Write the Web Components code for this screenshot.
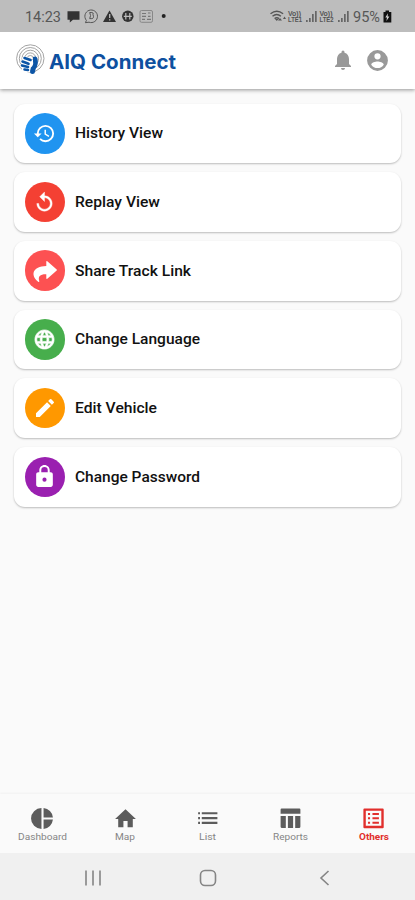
<!DOCTYPE html>
<html lang="en">
<head>
<meta charset="utf-8">
<title>AIQ Connect</title>
<style>
html,body{margin:0;height:100%;background:#fafafa}
body{font-family:Roboto,"Liberation Sans",sans-serif;overflow:hidden}
</style>
</head>
<body>
<aiq-app></aiq-app>
<script>
const ICONS = {
  history:'<path d="M13 3a9 9 0 0 0-9 9H1l3.89 3.89.07.14L9 12H6c0-3.87 3.13-7 7-7s7 3.13 7 7-3.13 7-7 7c-1.93 0-3.68-.79-4.94-2.06l-1.42 1.42A8.95 8.95 0 0 0 13 21a9 9 0 0 0 0-18zm-1 5v5l4.28 2.54.72-1.21-3.5-2.08V8z"/>',
  replay:'<path d="M12 5V1L7 6l5 5V7c3.31 0 6 2.69 6 6s-2.69 6-6 6-6-2.69-6-6H4c0 4.42 3.58 8 8 8s8-3.58 8-8-3.58-8-8-8z" stroke="currentColor" stroke-width=".4"/>',
  share:'<path d="M14.3 2.2 23.7 10.4Q24.2 11 23.7 11.6L14.3 19.8Q13.3 20.3 13.3 19.2V15.2C7.4 15 4.7 17 6.3 22.2 6.5 23 5.8 23.3 5.2 22.8-2.8 16.4-.7 7.2 13.3 7V2.8Q13.3 1.7 14.3 2.2z"/>',
  globe:'<path stroke="currentColor" stroke-width=".7" d="M11.99 2C6.47 2 2 6.48 2 12s4.47 10 9.99 10C17.52 22 22 17.52 22 12S17.52 2 11.99 2zm6.93 6h-2.95a15.65 15.65 0 0 0-1.38-3.56A8.03 8.03 0 0 1 18.92 8zM12 4.04c.83 1.2 1.48 2.53 1.91 3.96h-3.82c.43-1.43 1.08-2.76 1.91-3.96zM4.26 14C4.1 13.36 4 12.69 4 12s.1-1.36.26-2h3.38c-.08.66-.14 1.32-.14 2s.06 1.34.14 2H4.26zm.82 2h2.95c.32 1.25.78 2.45 1.38 3.56A7.99 7.99 0 0 1 5.08 16zm2.95-8H5.08a7.99 7.99 0 0 1 4.33-3.56A15.65 15.65 0 0 0 8.03 8zM12 19.96c-.83-1.2-1.48-2.53-1.91-3.96h3.82c-.43 1.43-1.08 2.76-1.91 3.96zM14.34 14H9.66c-.09-.66-.16-1.32-.16-2s.07-1.35.16-2h4.68c.09.65.16 1.32.16 2s-.07 1.34-.16 2zm.25 5.56c.6-1.11 1.06-2.31 1.38-3.56h2.95a8.03 8.03 0 0 1-4.33 3.56zM16.36 14c.08-.66.14-1.32.14-2s-.06-1.34-.14-2h3.38c.16.64.26 1.31.26 2s-.1 1.36-.26 2h-3.38z"/>',
  edit:'<path d="M3 17.25V21h3.75L17.81 9.94l-3.75-3.75L3 17.25zM20.71 7.04a1 1 0 0 0 0-1.41l-2.34-2.34a1 1 0 0 0-1.41 0l-1.83 1.83 3.75 3.75 1.83-1.83z"/>',
  lock:'<path d="M18 8h-1V6c0-2.76-2.24-5-5-5S7 3.24 7 6v2H6c-1.1 0-2 .9-2 2v10c0 1.1.9 2 2 2h12c1.1 0 2-.9 2-2V10c0-1.1-.9-2-2-2zm-6 9a2 2 0 1 1 0-4 2 2 0 0 1 0 4zm3.1-9H8.9V6a3.1 3.1 0 0 1 6.2 0v2z"/>',
  bell:'<path d="M12 22c1.1 0 2-.9 2-2h-4a2 2 0 0 0 2 2zm6-6v-5c0-3.07-1.64-5.64-4.5-6.32V4a1.5 1.5 0 0 0-3 0v.68C7.63 5.36 6 7.92 6 11v5l-2 2v1h16v-1l-2-2z"/>',
  account:'<path d="M12 2a10 10 0 1 0 0 20 10 10 0 0 0 0-20zm0 3a3 3 0 1 1 0 6 3 3 0 0 1 0-6zm0 14.2a7.2 7.2 0 0 1-6-3.22c.03-1.99 4-3.08 6-3.08 1.99 0 5.97 1.09 6 3.08a7.2 7.2 0 0 1-6 3.22z"/>',
  pie:'<path d="M11 2v20a10 10 0 0 1 0-20zm2.03 0v8.99H22A9.97 9.97 0 0 0 13.03 2zm0 11.01V22A9.97 9.97 0 0 0 22 13.01h-8.97z"/>',
  home:'<path d="M10 20.500v-6h4v6h5v-8h3L12 3 2 12.500h3v8z"/>',
  list:'<path d="M3 6h1.800v2H3zm0 4.600h1.800v2H3zm0 4.600h1.800v2H3zM6.500 6h15v2h-15zm0 4.600h15v2h-15zm0 4.600h15v2h-15z"/>',
  table:'<path d="M9.500 9.500h5V21h-5zM16.500 9.500H21.500V20a1 1 0 0 1-1 1h-4zM2.500 9.500h5V21h-4a1 1 0 0 1-1-1zM20.500 2.300h-17a1 1 0 0 0-1 1V7.500h19V3.300a1 1 0 0 0-1-1z"/>',
  others:'<path fill-rule="evenodd" d="M3.300 2.300h17.500q1 0 1 1v17q0 1-1 1H3.300q-1 0-1-1v-17q0-1 1-1zM4.600 4.600V19h14.900V4.600z"/><path d="M6.700 6.600h2v2h-2zm0 4.200h2v2h-2zm0 4.200h2v2h-2zM11 6.600h6.200v2H11zm0 4.200h6.200v2H11zm0 4.200h6.200v2H11z"/>'
};

const define = (name, css, html) => customElements.define(name, class extends HTMLElement {
  constructor() {
    super();
    this.attachShadow({mode:'open'}).innerHTML =
      `<style>*{box-sizing:border-box}${css}</style>` + (typeof html === 'function' ? html(this) : html);
  }
});

/* One glyph on a 24-unit grid, sized by its "size" attribute. */
define('ui-icon', ':host{display:inline-flex;flex:none}svg{display:block;fill:currentColor;overflow:visible}',
  el => `<svg width="${el.getAttribute('size')}" height="${el.getAttribute('size')}" viewBox="0 0 24 24">${ICONS[el.getAttribute('name')]}</svg>`);

/* A single line of text set to an exact width. */
define('fit-text', ':host{display:block;flex:none}svg{display:block;overflow:visible}text{font-family:inherit;font-size:inherit;font-weight:inherit;fill:currentColor}',
  el => { const w = el.getAttribute('width'), h = el.getAttribute('height') || 20, b = el.getAttribute('base') || 15;
    return `<svg width="${w}" height="${h}"><text x="0" y="${b}" textLength="${w}" lengthAdjust="spacingAndGlyphs">${el.getAttribute('label')}</text></svg>`; });

define('status-bar', `
  :host{display:flex;height:32px;padding:0 23px 0 25px;background:#bdbdbd;color:#575757;align-items:center;font-size:15px;position:relative;z-index:1}
  .pics{margin-left:5px}svg{display:block;overflow:visible}
  .right{margin-left:auto;display:flex;align-items:center}
  .lte{font:700 6.500px "Liberation Sans",sans-serif;fill:#555}`, `
  <fit-text label="14:23" width="36" height="32" base="22"></fit-text>
  <svg class="pics" width="102" height="32" viewBox="66 0 102 32">
    <path fill="#333" d="M67.500 11.300h12v8.500h-6.500l-3.200 2.700v-2.700h-2.300z"/>
    <g fill="none" stroke="#555" stroke-width="1"><path d="M86.400 20.400A6.300 6.300 0 1 1 89 22.200l-3.600.5z"/><path d="M89.700 12.500h2.100q2.200.2 1.200 2.200 1.500 3.600-1.200 3.900h-2.100q1.700-3 0-6.100z"/></g>
    <path fill="#333" d="m109.500 10.500 6.500 11.500h-13z"/><path stroke="#bdbdbd" stroke-width="1.300" d="M109.700 14v4M109.700 19.300v1.300"/>
    <circle cx="127.800" cy="16.300" r="5.700" fill="#333"/><g fill="none" stroke="#bdbdbd" stroke-width="1.200"><path d="M125.800 13v6.600M129.800 13v6.600M123.800 16.300h8"/></g>
    <rect x="140" y="10.500" width="12.500" height="11.800" rx="1.500" fill="none" stroke="#888"/><path stroke="#777" stroke-width="1.200" d="M142 13.500h4M142 16.300h4M148 13h2.500M148 16.300h2.500M142 19.300h3M147 19.300h4"/>
    <circle cx="163.700" cy="16" r="2" fill="#222"/>
  </svg>
  <div class="right">
    <svg width="83" height="32" viewBox="270 0 83 32">
      <g fill="none" stroke="#555" stroke-width="1.400"><path d="M270.500 13.800q6.300-5 12.600 0M272.500 16.200q4.200-3.500 8.400 0M274.600 18.600q2.200-1.800 4.400 0"/></g>
      <path fill="#555" d="m280 18 2 2.500h-4zM284.500 16.500l1.500 2.500h-3zM275 19h3.500l-1.700 2z"/>
      <text class="lte" x="288" y="16" textLength="13" lengthAdjust="spacingAndGlyphs">Vo))</text><text class="lte" x="288" y="22.300" textLength="14" lengthAdjust="spacingAndGlyphs">LTE1</text>
      <path fill="#666" d="M306 20h1.700v2H306zM309 18h1.700v4H309zM312 14h1.700v8H312zM315 11h1.700v11H315z"/>
      <text class="lte" x="319.500" y="16" textLength="13" lengthAdjust="spacingAndGlyphs">Vo))</text><text class="lte" x="319.500" y="22.300" textLength="14" lengthAdjust="spacingAndGlyphs">LTE2</text>
      <path fill="#666" d="M338 20h1.700v2H338zM341 18h1.700v4H341zM344 14h1.700v8H344zM347 11h1.700v11H347z"/>
    </svg>
    <fit-text label="95%" width="27" height="32" base="22"></fit-text>
    <svg width="12" height="32" viewBox="380 0 12 32"><path fill="#111" d="M383.500 12h2v-1.500h3.500V12h2.300v10.500h-7.800z"/><path fill="#d5d5d5" d="M388 13.300l-2.700 4.200h1.700l-.6 3.500 3-4.500h-1.800z"/></svg>
  </div>`);

define('app-bar', `
  :host{display:flex;align-items:center;height:56.500px;background:#fff;padding:0 25.500px 0 15px;box-shadow:0 1px 4px rgba(0,0,0,.42);color:#999;position:relative}
  svg{display:block}fit-text{margin-left:3.500px;color:#0e50a0;font:700 19.500px Inter,sans-serif}
  .spacer{flex:1}.user{margin-left:10px}`, `
  <svg width="30" height="56" viewBox="15 32 30 56">
    <g fill="none" stroke="#999" stroke-width=".9"><circle cx="30.300" cy="58.500" r="13.700"/><circle cx="30.300" cy="58.500" r="11"/><circle cx="30.300" cy="58.500" r="8.300"/><circle cx="30.300" cy="58.500" r="5.600"/><circle cx="30.300" cy="58.500" r="3"/></g>
    <path fill="#fff" d="M22 60h13v12H22z"/>
    <path fill="#0c55a6" d="M33 57q3.500-1.500 4.500 1.500 1.200 6.500-1.900 10.500l-.4 2.500q-.5 2.500-2.600 2.500-2.900 0-2.500-3.200l.8-3.300q3-2.500 2.100-6z"/>
    <g fill="none" stroke="#fff" stroke-width="4" stroke-linecap="round"><path d="m24 58.500 6 1.500M22.500 62l7.500 1.500"/></g>
    <g fill="none" stroke="#0c55a6" stroke-width="2.600" stroke-linecap="round"><path d="m24.500 58 6 2M22.500 61.500l6 2.300M22 65.500l6 1.500M24.500 69.500l3.500.5"/></g>
  </svg>
  <fit-text label="AIQ Connect" width="127" height="56" base="37.200"></fit-text><span class="spacer"></span>
  <ui-icon name="bell" size="24"></ui-icon><ui-icon class="user" name="account" size="25"></ui-icon>`);

define('menu-card', `
  :host{display:flex;align-items:center;height:59.700px;padding-left:10.500px;border-radius:11px;background:#fff;box-shadow:0 1px 2px rgba(0,0,0,.25);color:#111;font-weight:500;font-size:15.200px}
  .disc{width:40.500px;height:40.500px;border-radius:50%;display:grid;place-items:center;color:#fff;margin-right:10px;flex:none;background:var(--tone)}`,
  el => `<span class="disc" style="--tone:${el.getAttribute('tone')}"><ui-icon name="${el.getAttribute('icon')}" size="${el.getAttribute('size')}"></ui-icon></span>
  <fit-text label="${el.getAttribute('label')}" width="${el.getAttribute('width')}"></fit-text>`);

define('nav-tab', `
  :host{display:flex;flex:1;flex-direction:column;align-items:center;padding-top:11.500px;color:#5c5c5c;font-size:9.500px}
  :host([active]){color:#e12f2c;font-weight:700}
  fit-text{color:#858585}:host([active]) fit-text{color:#e12f2c}`,
  el => `<ui-icon name="${el.getAttribute('icon')}" size="25"></ui-icon><fit-text label="${el.getAttribute('label')}" width="${el.getAttribute('width')}" height="14" base="8.500"></fit-text>`);

define('tab-bar', ':host{display:flex;height:59px;padding-left:1px;background:#fafafa;box-shadow:0 -1px 2px rgba(0,0,0,.04)}', '<slot></slot>');

define('system-nav', ':host{display:grid;grid-template-columns:repeat(3,1fr);width:100%;height:47px;padding:2px 33px 0 35px;background:#f0f0f0;align-items:center;justify-items:center}svg{display:block;fill:none;stroke:#858585;stroke-width:1.600}', `
  <svg width="18" height="18"><path d="M2 1.500v15M9 1.500v15M16 1.500v15"/></svg>
  <svg width="18" height="18"><rect x="1.500" y="1.500" width="15" height="15" rx="4.500"/></svg>
  <svg width="18" height="18"><path d="M13.500 2 6 9l7.500 7"/></svg>`);

define('aiq-app', `
  :host{display:flex;flex-direction:column;width:415px;height:900px;background:#fafafa}
  main{flex:1;display:flex;flex-direction:column;gap:9px;padding:15px 14px 0}`, `
  <status-bar></status-bar><app-bar></app-bar>
  <main>
    <menu-card icon="history" size="23" tone="#2094f0" label="History View" width="88"></menu-card>
    <menu-card icon="replay" size="23" tone="#f44033" label="Replay View" width="85"></menu-card>
    <menu-card icon="share" size="24" tone="#fd5152" label="Share Track Link" width="116"></menu-card>
    <menu-card icon="globe" size="23" tone="#47ae4c" label="Change Language" width="125"></menu-card>
    <menu-card icon="edit" size="24" tone="#ff9800" label="Edit Vehicle" width="82"></menu-card>
    <menu-card icon="lock" size="25" tone="#9a20b0" label="Change Password" width="125"></menu-card>
  </main>
  <tab-bar>
    <nav-tab icon="pie" label="Dashboard" width="49"></nav-tab>
    <nav-tab icon="home" label="Map" width="20"></nav-tab>
    <nav-tab icon="list" label="List" width="17"></nav-tab>
    <nav-tab icon="table" label="Reports" width="35"></nav-tab>
    <nav-tab active icon="others" label="Others" width="30"></nav-tab>
  </tab-bar>
  <system-nav></system-nav>`);
</script>
</body>
</html>
